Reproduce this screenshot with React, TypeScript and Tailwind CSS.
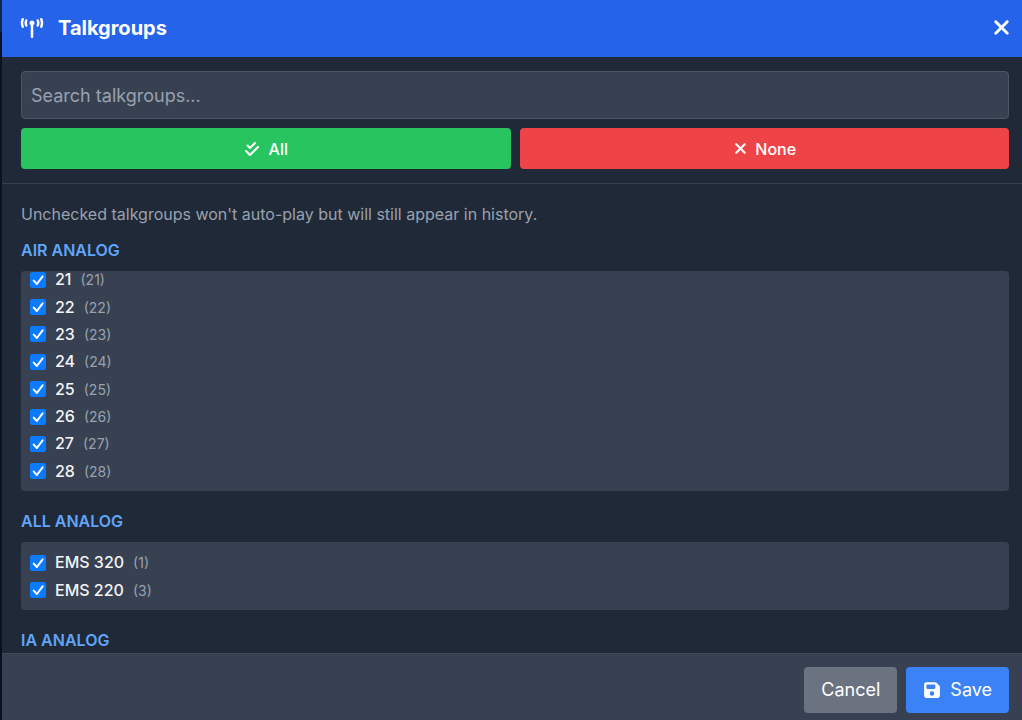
import { useState } from 'react';
import { FaCheckDouble, FaFloppyDisk, FaTowerBroadcast, FaXmark } from 'react-icons/fa6';

interface Talkgroup {
  id: number;
  name: string;
}

interface TalkgroupSection {
  title: string;
  talkgroups: Talkgroup[];
  scrolled?: boolean;
}

const sections: TalkgroupSection[] = [
  {
    title: 'AIR ANALOG',
    scrolled: true,
    talkgroups: [21, 22, 23, 24, 25, 26, 27, 28].map((id) => ({ id, name: String(id) })),
  },
  {
    title: 'ALL ANALOG',
    talkgroups: [
      { id: 1, name: 'EMS 320' },
      { id: 3, name: 'EMS 220' },
    ],
  },
  { title: 'IA ANALOG', talkgroups: [] },
];

const allIds = sections.flatMap((s) => s.talkgroups.map((t) => t.id));

interface RowProps {
  talkgroup: Talkgroup;
  checked: boolean;
  onToggle: (id: number) => void;
}

function TalkgroupRow({ talkgroup, checked, onToggle }: RowProps) {
  return (
    <li className="flex items-center">
      <label className="flex items-center gap-[9px]">
        <span className="grid size-4 shrink-0">
          <input
            type="checkbox"
            checked={checked}
            onChange={() => onToggle(talkgroup.id)}
            className="peer col-start-1 row-start-1 size-4 appearance-none rounded-[2px] border border-gray-400 bg-white checked:border-[#0a7aff] checked:bg-[#0a7aff]"
          />
          <svg
            viewBox="0 0 16 16"
            className="pointer-events-none invisible col-start-1 row-start-1 size-4 peer-checked:visible"
            fill="none"
            stroke="white"
            strokeWidth="2"
            strokeLinecap="round"
            strokeLinejoin="round"
          >
            <path d="M3.7 8.6 6.9 12 12.6 4.4" />
          </svg>
        </span>
        <span className="flex items-baseline gap-[9px]">
          <span className="text-base leading-4 font-medium text-gray-100">{talkgroup.name}</span>
          <span className="text-sm leading-4 text-gray-400">({talkgroup.id})</span>
        </span>
      </label>
    </li>
  );
}

export default function App() {
  const [checked, setChecked] = useState<number[]>(allIds);
  const [query, setQuery] = useState('');

  const toggle = (id: number) =>
    setChecked((prev) => (prev.includes(id) ? prev.filter((x) => x !== id) : [...prev, id]));

  return (
    <div className="flex h-screen overflow-hidden bg-[#0c1120] font-['Inter',sans-serif]">
      {/* Edge of the page behind the dialog */}
      <div aria-hidden="true" className="w-[2px] shrink-0 overflow-hidden">
        <div className="h-8 bg-[#16244a]" />
      </div>

      <div role="dialog" aria-labelledby="dialog-title" className="flex min-w-0 flex-1 flex-col bg-[#1f2937]">
        {/* Header */}
        <header className="flex h-[57px] shrink-0 items-center justify-between bg-[#2563eb] pr-[9px] pb-[2px] pl-[18px] text-white">
          <h2 id="dialog-title" className="flex items-center gap-[14px] text-xl font-bold">
            <FaTowerBroadcast className="h-5 w-6" />
            Talkgroups
          </h2>
          <button aria-label="Close" className="flex items-center justify-center">
            <FaXmark size={23} />
          </button>
        </header>

        {/* Search and bulk actions */}
        <div className="flex shrink-0 flex-col gap-[9px] border-b border-[#374151] py-[14px] pr-[13px] pl-[19px]">
          <input
            type="text"
            aria-label="Search talkgroups"
            placeholder="Search talkgroups..."
            value={query}
            onChange={(e) => setQuery(e.target.value)}
            className="h-12 w-full rounded border border-[#4b5563] bg-[#374151] px-[9px] text-lg text-white placeholder:text-gray-400"
          />
          <div className="flex gap-[9px] text-base font-medium text-white">
            <button
              onClick={() => setChecked(allIds)}
              className="flex h-[41px] flex-1 items-center justify-center gap-[9px] rounded bg-[#28c45f]"
            >
              <FaCheckDouble size={16} />
              All
            </button>
            <button
              onClick={() => setChecked([])}
              className="flex h-[41px] flex-1 items-center justify-center gap-[6px] rounded bg-[#ef4447]"
            >
              <FaXmark size={17} />
              None
            </button>
          </div>
        </div>

        {/* Talkgroup list */}
        <main className="min-h-0 flex-1 overflow-hidden pt-[19px] pr-[13px] pl-[19px]">
          <p className="mb-[13px] text-base leading-[23px] text-gray-400">
            Unchecked talkgroups won't auto-play but will still appear in history.
          </p>
          {sections.map((section) => (
            <section key={section.title} className="mb-[19px]">
              <h3 className="mb-[9px] text-base leading-[23px] font-semibold text-[#60a5fa]">{section.title}</h3>
              {section.scrolled ? (
                <div className="flex h-[220px] flex-col justify-end overflow-hidden rounded bg-[#374151] px-[9px] pb-[6px]">
                  <ul className="grid h-[219px] shrink-0 auto-rows-fr">
                    {section.talkgroups.map((t) => (
                      <TalkgroupRow key={t.id} talkgroup={t} checked={checked.includes(t.id)} onToggle={toggle} />
                    ))}
                  </ul>
                </div>
              ) : (
                section.talkgroups.length > 0 && (
                  <ul className="grid h-[68px] auto-rows-fr rounded bg-[#374151] px-[9px] pt-[7px] pb-[6px]">
                    {section.talkgroups.map((t) => (
                      <TalkgroupRow key={t.id} talkgroup={t} checked={checked.includes(t.id)} onToggle={toggle} />
                    ))}
                  </ul>
                )
              )}
            </section>
          ))}
        </main>

        {/* Footer */}
        <footer className="flex h-[67px] shrink-0 justify-end gap-[9px] border-t border-[#3f4959] bg-[#374151] pt-[13px] pr-[13px] text-lg text-white">
          <button className="h-[46px] rounded bg-[#6b7280] px-[17px]">Cancel</button>
          <button className="flex h-[46px] items-center gap-[9px] rounded bg-[#3b82f6] px-[17px]">
            <FaFloppyDisk size={18} />
            Save
          </button>
        </footer>
      </div>
    </div>
  );
}
